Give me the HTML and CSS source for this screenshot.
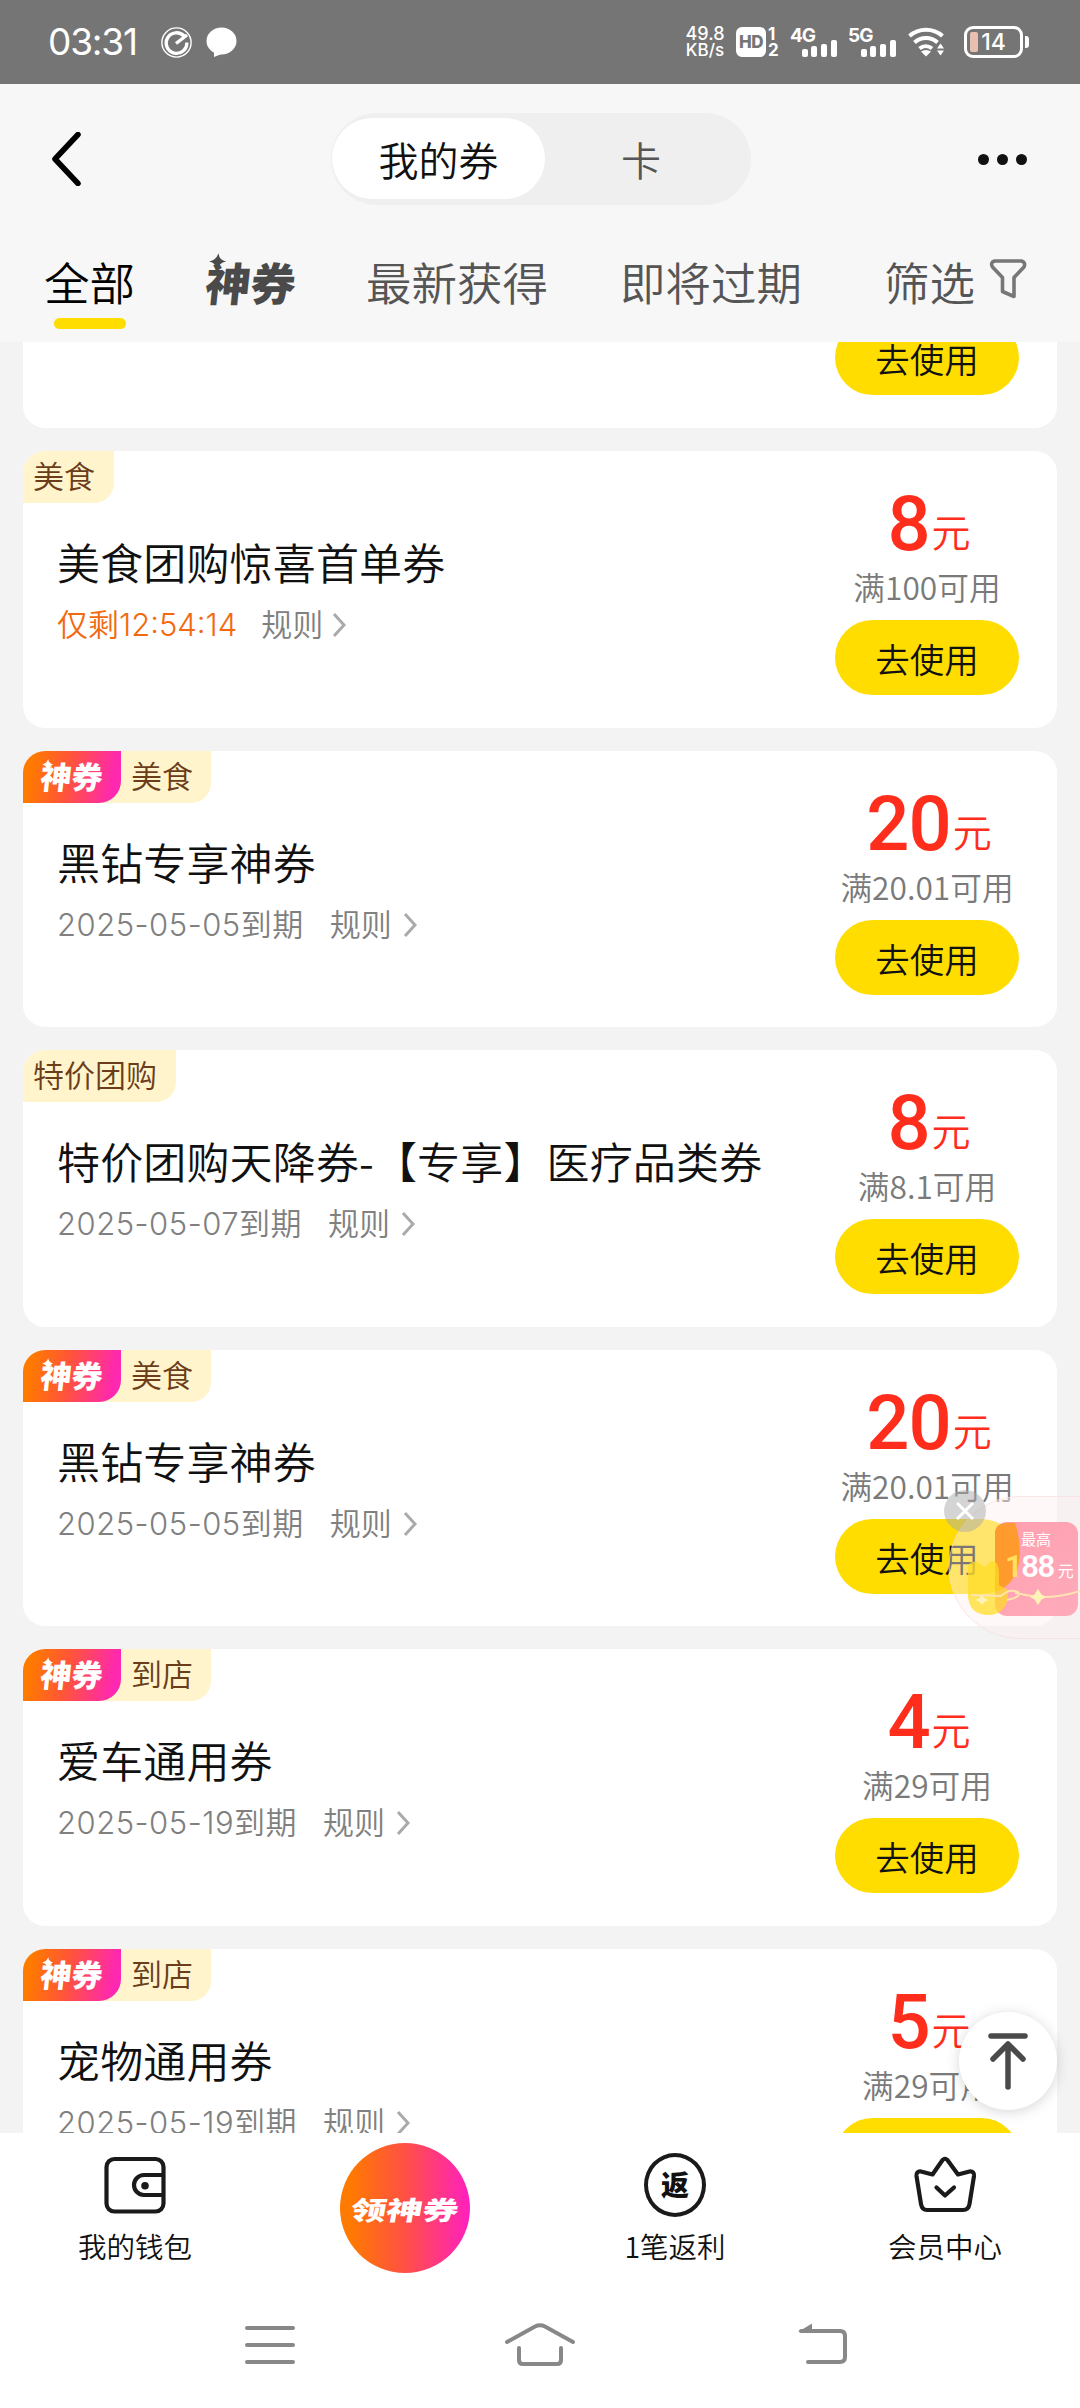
FILE: index.html
```html
<!DOCTYPE html>
<html lang="zh-CN">
<head>
<meta charset="utf-8">
<title>我的券</title>
<link rel="stylesheet" href="styles.css">
</head>
<body>
<div class="screen">
  <div class="status">
    <span class="clock">03:31</span>
    <svg class="st-speed" width="31" height="31" viewBox="0 0 31 31" fill="none" stroke="#fff"><circle cx="15.500" cy="15.500" r="14.600" stroke-width="1.400"/><path d="M23 9A10.300 10.300 0 1 0 25.800 15.500" stroke-width="3.400"/><path d="M15 16.500 26 8" stroke-width="3.400"/></svg>
    <svg class="st-chat" width="31" height="31" viewBox="0 0 31 31" fill="#fff"><ellipse cx="15.500" cy="14" rx="15" ry="13.500"/><path d="M8 24v6l10-4z"/></svg>
    <span class="spacer"></span>
    <span class="net"><span>49.8</span><span>KB/s</span></span>
    <span class="hd">HD</span>
    <span class="sim"><span>1</span><span>2</span></span>
    <svg class="st-4g" width="47" height="30" viewBox="0 0 47 30"><text x="0" y="15" class="gen">4G</text><g fill="#fff"><rect x="12" y="22" width="6" height="8" rx="2"/><rect x="21" y="19" width="6" height="11" rx="2"/><rect x="31" y="17" width="6" height="13" rx="2"/><rect x="41" y="13" width="6" height="17" rx="2"/></g></svg>
    <svg class="st-5g" width="48" height="30" viewBox="0 0 48 30"><text x="0" y="15" class="gen">5G</text><g fill="#fff"><rect x="13" y="22" width="6" height="8" rx="2"/><rect x="22" y="19" width="6" height="11" rx="2"/><rect x="32" y="17" width="6" height="13" rx="2"/><rect x="42" y="13" width="6" height="17" rx="2"/></g></svg>
    <svg class="st-wifi" width="38" height="30" viewBox="0 0 38 30" fill="none" stroke="#fff" stroke-width="4"><path d="M1.500 9a25 25 0 0 1 33 0M6.500 15.500a17 17 0 0 1 23 0M11.500 21.500a10 10 0 0 1 12.500 0"/><path d="M13 24.500q5-3 10 0l-5 5z" fill="#fff" stroke="none"/><path d="M29 21.500l3.500-5 3.500 5zM29 23.500l3.500 5 3.500-5z" fill="#fff" stroke="none"/></svg>
    <span class="battery"><i></i>14</span>
  </div>

  <header class="bar">
    <svg class="back" width="30" height="54" viewBox="0 0 30 54" fill="none" stroke="#000" stroke-width="5.500" stroke-linecap="round" stroke-linejoin="round"><path d="M27 2.500 4 27 27 51.500"/></svg>
    <div class="segment"><span class="seg on">我的券</span><span class="seg">卡</span></div>
    <div class="more"><i></i><i></i><i></i></div>
  </header>
  <nav class="tabs">
    <span class="tab on">全部</span>
    <span class="tab logo-tab"><span class="logo dark">神券<svg class="star" viewBox="0 0 20 20"><path d="M10 0Q11.500 8.500 20 10 11.500 11.500 10 20 8.500 11.500 0 10 8.500 8.500 10 0z"/></svg></span></span>
    <span class="tab latest">最新获得</span>
    <span class="tab soon">即将过期</span>
    <span class="tab filter">筛选<svg width="38" height="42" viewBox="0 0 38 42" fill="none" stroke="#777" stroke-width="3.600" stroke-linejoin="round"><path d="M5.500 3H32.500Q37 4.500 35 9L25 19.500V38.500L13.500 33.500V19.500L3.500 9Q1 4.500 5.500 3z"/></svg></span>
  </nav>

  <main class="list">
    <section class="card cut">
      <div class="price-col"><span class="use">去使用</span></div>
    </section>

    <section class="card">
      <div class="tags"><span class="tag">美食</span></div>
      <div class="info"><h2>美食团购惊喜首单券</h2><p class="urgent"><span class="left">仅剩12:54:14</span><span>规则</span><svg class="chev" viewBox="0 0 14 26"><path d="M2 2 12 13 2 24"/></svg></p></div>
      <div class="price-col"><div class="price"><b>8</b><span>元</span></div><div class="min">满100可用</div><span class="use">去使用</span></div>
    </section>

    <section class="card">
      <div class="tags"><span class="shen"><span class="logo">神券<svg class="star" viewBox="0 0 20 20"><path d="M10 0Q11.500 8.500 20 10 11.500 11.500 10 20 8.500 11.500 0 10 8.500 8.500 10 0z"/></svg></span></span><span class="tag">美食</span></div>
      <div class="info"><h2>黑钻专享神券</h2><p><span class="date">2025-05-05到期</span><span>规则</span><svg class="chev" viewBox="0 0 14 26"><path d="M2 2 12 13 2 24"/></svg></p></div>
      <div class="price-col"><div class="price"><b>20</b><span>元</span></div><div class="min">满20.01可用</div><span class="use">去使用</span></div>
    </section>

    <section class="card">
      <div class="tags"><span class="tag">特价团购</span></div>
      <div class="info"><h2>特价团购天降券-【专享】医疗品类券</h2><p><span class="date">2025-05-07到期</span><span>规则</span><svg class="chev" viewBox="0 0 14 26"><path d="M2 2 12 13 2 24"/></svg></p></div>
      <div class="price-col"><div class="price"><b>8</b><span>元</span></div><div class="min">满8.1可用</div><span class="use">去使用</span></div>
    </section>

    <section class="card">
      <div class="tags"><span class="shen"><span class="logo">神券<svg class="star" viewBox="0 0 20 20"><path d="M10 0Q11.500 8.500 20 10 11.500 11.500 10 20 8.500 11.500 0 10 8.500 8.500 10 0z"/></svg></span></span><span class="tag">美食</span></div>
      <div class="info"><h2>黑钻专享神券</h2><p><span class="date">2025-05-05到期</span><span>规则</span><svg class="chev" viewBox="0 0 14 26"><path d="M2 2 12 13 2 24"/></svg></p></div>
      <div class="price-col"><div class="price"><b>20</b><span>元</span></div><div class="min">满20.01可用</div><span class="use">去使用</span></div>
    </section>

    <section class="card">
      <div class="tags"><span class="shen"><span class="logo">神券<svg class="star" viewBox="0 0 20 20"><path d="M10 0Q11.500 8.500 20 10 11.500 11.500 10 20 8.500 11.500 0 10 8.500 8.500 10 0z"/></svg></span></span><span class="tag">到店</span></div>
      <div class="info"><h2>爱车通用券</h2><p><span class="date">2025-05-19到期</span><span>规则</span><svg class="chev" viewBox="0 0 14 26"><path d="M2 2 12 13 2 24"/></svg></p></div>
      <div class="price-col"><div class="price"><b>4</b><span>元</span></div><div class="min">满29可用</div><span class="use">去使用</span></div>
    </section>

    <section class="card">
      <div class="tags"><span class="shen"><span class="logo">神券<svg class="star" viewBox="0 0 20 20"><path d="M10 0Q11.500 8.500 20 10 11.500 11.500 10 20 8.500 11.500 0 10 8.500 8.500 10 0z"/></svg></span></span><span class="tag">到店</span></div>
      <div class="info"><h2>宠物通用券</h2><p><span class="date">2025-05-19到期</span><span>规则</span><svg class="chev" viewBox="0 0 14 26"><path d="M2 2 12 13 2 24"/></svg></p></div>
      <div class="price-col"><div class="price"><b>5</b><span>元</span></div><div class="min">满29可用</div><span class="use">去使用</span></div>
    </section>
  </main>

  <footer class="dock">
    <div class="item"><svg width="64" height="64" viewBox="0 0 64 64" fill="none" stroke="#1a1a1a" stroke-width="4.200"><rect x="3.500" y="6" width="57" height="52.500" rx="8"/><path d="M60 22H41a10 10 0 0 0 0 20H60"/><circle cx="42" cy="32.800" r="3.800" fill="#1a1a1a" stroke="none"/></svg><span>我的钱包</span></div>
    <div class="item"><div class="claim"><span>领神券</span></div></div>
    <div class="item"><div class="rebate">返</div><span>1笔返利</span></div>
    <div class="item"><svg width="64" height="64" viewBox="0 0 64 64" fill="none" stroke="#1a1a1a" stroke-width="4.200" stroke-linejoin="round" stroke-linecap="round"><path d="M8 18.500 19.500 21.500 28.500 8.500Q32 3 35.500 8.500L45 21.500 56.500 18.500Q61.500 18 61 23L56.500 51Q55.500 57 50 57H14Q9 57 8 51L3.500 23Q3 18 8 18.500z"/><path d="M23.500 34.500 32 42.500 41 34.500"/></svg><span>会员中心</span></div>
  </footer>

  <div class="sysnav">
    <svg width="54" height="46" viewBox="0 0 54 46"><path d="M4 6H50M4 23H50M4 40H50"/></svg>
    <svg width="74" height="46" viewBox="0 0 74 46"><path d="M4 20 32 4.500Q37 2 42 4.500L70 20M16 26V38Q16 42 20 42H54Q58 42 58 38V26"/></svg>
    <svg class="nav-back" width="54" height="46" viewBox="0 0 54 46"><path d="M5 9H44Q49 9 49 14V35Q49 40 44 40H12"/><path d="M2 10 16 1.500V10z" class="tip"/></svg>
  </div>

  <div class="promo">
    <svg width="140" height="165" viewBox="-9 0 140 165">
      <defs><linearGradient id="pk" x1="0" y1="0" x2="1" y2="1"><stop offset="0" stop-color="#ff8a9c"/><stop offset="1" stop-color="#ff9cb0"/></linearGradient></defs>
      <path d="M132 12.500H71A71 71 0 0 0 71 154.500H132z" fill="#fff0f0" fill-opacity=".45" stroke="#fadcdc" stroke-opacity=".7"/>
      <rect x="46" y="38" width="83" height="94" rx="12" fill="url(#pk)" fill-opacity=".82"/>
      <path d="M66 39H56Q46 40 46 50V108Q70 100 71 68 70 49 66 39z" fill="#ff9a12" fill-opacity=".8"/>
      <path d="M19 90Q17 76 28 78L36 83 42 77Q50 76 50 91V101L59 106Q60 130 40 131 20 131 19 112z" fill="#ffdc20" fill-opacity=".72"/>
      <path d="M22 111 52 112Q60 104 69 108 73 113 58 116M66 109 88 113Q110 114 131 107" fill="none" stroke="#ffe4b0" stroke-width="2"/>
      <path d="M89 105 92.500 110.500 97 113 92.500 115.500 89 121 85.500 115.500 81 113 85.500 110.500zM33 111 36 114.500 40 116 36 117.500 33 121 30 117.500 26 116 30 114.500z" fill="#fff3b8"/>
      <circle cx="16" cy="27" r="21" fill="#aaa" fill-opacity=".5"/>
      <path d="M8 19 24 35M24 19 8 35" stroke="#fff" stroke-width="3"/>
    </svg>
    <span class="p-top">最高</span>
    <span class="p-num"><em>1</em>88<small>元</small></span>
  </div>

  <div class="totop"><svg width="48" height="62" viewBox="0 0 48 62" fill="none" stroke="#4a4a4a" stroke-width="5.500" stroke-linecap="round" stroke-linejoin="round"><path d="M7 6H41M24 57V15M9 29 24 14 39 29"/></svg></div>
</div>
</body>
</html>
```
FILE: styles.css
```css
* { box-sizing: border-box; }
body { margin: 0; background: #fff; font-family: "Noto Sans CJK SC", sans-serif; font-weight: 350; }
.screen { position: relative; width: 1080px; height: 2408px; overflow: hidden; display: flex; flex-direction: column; background: #f3f3f4; color: #111; }

.status { height: 84px; flex: none; background: #757575; color: #fff; display: flex; align-items: center; padding: 0 51px 0 48px; font-family: Inter, sans-serif; font-weight: 400; }
.status svg { overflow: visible; flex: none; }
.clock { font-size: 37px; line-height: 84px; width: 91px; white-space: nowrap; letter-spacing: -1.200px; }
.st-speed { margin-left: 22px; }
.st-chat { margin-left: 14px; }
.spacer { flex: 1; }
.net { display: flex; flex-direction: column; align-items: center; font-size: 18px; line-height: 17px; width: 40px; margin-right: 11px; font-weight: 500; }
.net span:last-child { font-size: 17px; }
.hd { width: 30px; height: 30px; border-radius: 6px; background: #fff; color: #757575; font-weight: 800; font-size: 17px; line-height: 30px; text-align: center; letter-spacing: -.500px; }
.sim { display: flex; flex-direction: column; width: 12px; margin: 0 10px 0 2px; font-size: 17px; line-height: 16px; font-weight: 700; }
.gen { font: 700 19px Inter, sans-serif; fill: #fff; letter-spacing: -1px; }
.st-5g { margin-left: 11px; }
.st-wifi { margin-left: 12px; }
.battery { position: relative; width: 59px; height: 32px; margin-left: 18px; margin-right: 6px; border: 3px solid #fff; border-radius: 9px; font-size: 23px; line-height: 26px; text-align: center; font-weight: 500; flex: none; }
.battery i { position: absolute; left: 3px; top: 3px; width: 8px; height: 20px; background: #e8c0b0; border-radius: 2px; }
.battery::after { content: ""; position: absolute; right: -9px; top: 7px; width: 4px; height: 12px; background: #fff; border-radius: 0 3px 3px 0; }

.bar { height: 150px; flex: none; background: #f7f7f7; display: flex; align-items: center; padding: 0 53px 0 51px; }
.segment { display: flex; width: 420px; height: 92px; margin: 0 auto 0 250px; padding: 5px 1px 6px; border-radius: 46px; background: #efefef; }
.seg { flex: 1; display: flex; align-items: center; justify-content: center; font-size: 40px; line-height: 1; color: #555; }
.seg.on { flex: 0 0 213px; background: #fff; border-radius: 41px; color: #111; }
.seg:last-child { padding-right: 13px; }
.more { display: flex; gap: 8px; }
.more i { width: 11px; height: 11px; border-radius: 50%; background: #111; }

.tabs { height: 108px; flex: none; background: #f7f7f7; display: flex; align-items: flex-start; padding: 15px 0 0 44px; font-size: 45.500px; line-height: 64px; color: #555; white-space: nowrap; }
.tab.on { color: #000; width: 91px; display: flex; flex-direction: column; align-items: center; }
.tab.on::after { content: ""; width: 72px; height: 11px; margin-top: 5px; border-radius: 6px; background: #ffdd00; }
.logo-tab { margin-left: 71px; width: 92px; }
.latest { margin-left: 68px; width: 182px; }
.soon { margin-left: 72px; width: 182px; }
.filter { display: flex; margin-left: 82px; }
.filter svg { margin: 9px 0 0 14px; }
.logo { position: relative; display: inline-block; font-weight: 900; transform: skewX(-6deg); color: #fff; }
.logo .star { position: absolute; fill: currentColor; }
.logo.dark { color: #4a4a4a; font-size: 45px; line-height: 53px; }
.logo.dark .star { width: 17px; height: 17px; left: 1px; top: -2px; }

.list { height: 1791px; flex: none; overflow: hidden; padding: 0 23px; display: flex; flex-direction: column; gap: 23px; }
.card { position: relative; flex: none; height: 276.600px; background: #fff; border-radius: 22px; overflow: hidden; display: grid; grid-template-columns: 1fr 184px; grid-template-rows: 52px 1fr; padding-right: 37px; }
.card.cut { height: 86px; border-radius: 0 0 22px 22px; }
.card.cut .price-col { margin-top: -22px; }
.tags { grid-column: 1; grid-row: 1; display: flex; align-items: stretch; height: 52px; }
.tag { background: #fff4cc; color: #6b3d1a; font-size: 31px; line-height: 48px; padding: 0 19px 0 10px; border-radius: 0 0 20px 0; }
.shen { position: relative; z-index: 1; width: 98px; background: linear-gradient(100deg, #ff7a00 10%, #ff5538 45%, #ff28b0 90%); border-radius: 0 0 22px 0; text-align: center; }
.shen + .tag { margin-left: -30px; padding: 0 18px 0 40px; }
.shen .logo { font-size: 31px; line-height: 49px; }
.shen .star { width: 11px; height: 11px; left: 0; top: 8px; }
.info { grid-column: 1; grid-row: 2; padding: 26px 0 0 34px; }
.info h2 { margin: 0; font-size: 43px; line-height: 64px; font-weight: inherit; white-space: nowrap; letter-spacing: .150px; }
.info p { margin: 9px 0 0; display: flex; align-items: center; gap: 26px; height: 46px; font-family: Inter, "Noto Sans CJK SC", sans-serif; font-size: 31px; line-height: 46px; color: #808080; white-space: nowrap; }
.info .urgent { gap: 24px; }
.info .left { color: #f26a10; }
.info .date { letter-spacing: .500px; }
.chev { width: 14px; height: 26px; margin-left: -15px; fill: none; stroke: #aaa; stroke-width: 3; }
.price-col { grid-column: 2; grid-row: 1 / 3; display: flex; flex-direction: column; align-items: center; white-space: nowrap; margin-left: -1px; margin-right: 1px; }
.price { margin-top: 33px; height: 80px; line-height: 80px; color: #ff2d1c; font-size: 39px; display: flex; align-items: baseline; gap: 2px; padding-left: 4px; }
.price b { font: 500 76px/80px Roboto, sans-serif; letter-spacing: -1px; }
.price span { margin-bottom: 3px; transform: translateY(-3px); }
.min { margin-top: -1px; height: 46px; font-size: 31.700px; line-height: 46px; color: #7a7a7a; }
.use { margin-top: 11px; width: 184px; height: 75px; border-radius: 38px; background: #ffdd00; color: #111; font-size: 34.500px; line-height: 76px; text-align: center; flex: none; }
.cut .use { margin-top: 0; }

.dock { height: 150px; flex: none; background: #fff; display: grid; grid-template-columns: repeat(4, 1fr); }
.item { display: flex; flex-direction: column; align-items: center; padding-top: 20px; font-size: 28.500px; line-height: 40px; white-space: nowrap; }
.item > span { margin-top: 9px; }
.claim { width: 130px; height: 130px; margin-top: -10px; border-radius: 50%; background: linear-gradient(90deg, #ff7a00 8%, #ff5044 50%, #ff20c0 100%); color: #fff; display: flex; align-items: center; justify-content: center; font-size: 36px; font-weight: 900; }
.claim span { transform: skewX(-10deg) scaleY(.72); }
.rebate { width: 62px; height: 64px; border: 4px solid #1a1a1a; border-radius: 50%; font-size: 28px; font-weight: 900; line-height: 55px; text-align: center; }

.sysnav { flex: 1; background: #fff; display: grid; grid-template-columns: repeat(3, 270px); justify-content: center; justify-items: center; padding-top: 39px; }
.sysnav svg { fill: none; stroke: #888; stroke-width: 4; stroke-linecap: round; }
.sysnav .tip { fill: #888; stroke: none; }
.sysnav .nav-back { margin-left: 26px; }

.promo { position: absolute; left: 940px; top: 1484px; width: 140px; height: 165px; color: #fff; white-space: nowrap; }
.p-top { position: absolute; left: 81px; top: 43px; font-size: 15px; line-height: 24px; font-weight: 400; }
.p-num { position: absolute; left: 65px; top: 63px; font: 600 31px/40px Roboto, "Noto Sans CJK SC", sans-serif; letter-spacing: -1.500px; }
.p-num em { font-style: normal; color: #ffe060; }
.p-num small { font-size: 16px; font-weight: 400; margin-left: 4px; }

.totop { position: absolute; left: 959px; top: 2012px; width: 98px; height: 98px; border-radius: 50%; background: #fff; box-shadow: 0 2px 14px rgba(0,0,0,.16); display: flex; align-items: center; justify-content: center; }
```
